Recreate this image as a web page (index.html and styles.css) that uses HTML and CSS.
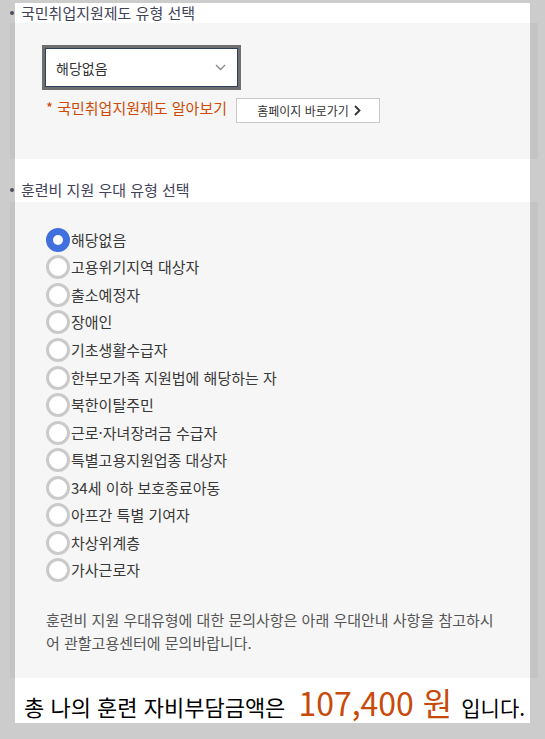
FILE: index.html
```html
<!DOCTYPE html>
<html lang="ko">
<head>
<meta charset="utf-8">
<title>훈련비 자비부담금액</title>
<link rel="stylesheet" href="styles.css">
</head>
<body>
<div class="panel">
  <h2 class="title first"><span class="dot"></span>국민취업지원제도 유형 선택</h2>
  <section class="box box-top">
    <div class="select">
      <div class="select-inner">
        <span class="select-text">해당없음</span>
        <svg class="chev" width="11" height="7" viewBox="0 0 11 7"><polyline points="1,1 5.5,5.5 10,1" fill="none" stroke="#8a8a8a" stroke-width="1.4"/></svg>
      </div>
    </div>
    <div class="info-row">
      <span class="info">* 국민취업지원제도 알아보기</span>
      <button class="go-btn">홈페이지 바로가기<svg class="btn-chev" width="7" height="11" viewBox="0 0 7 11"><polyline points="1,1 5.5,5.5 1,10" fill="none" stroke="#333" stroke-width="1.8"/></svg></button>
    </div>
  </section>
  <h2 class="title second"><span class="dot"></span>훈련비 지원 우대 유형 선택</h2>
  <section class="box box-bottom">
    <ul class="radios">
      <li class="radio-row"><span class="radio checked"></span><span class="label">해당없음</span></li>
      <li class="radio-row"><span class="radio"></span><span class="label">고용위기지역 대상자</span></li>
      <li class="radio-row"><span class="radio"></span><span class="label">출소예정자</span></li>
      <li class="radio-row"><span class="radio"></span><span class="label">장애인</span></li>
      <li class="radio-row"><span class="radio"></span><span class="label">기초생활수급자</span></li>
      <li class="radio-row"><span class="radio"></span><span class="label">한부모가족 지원법에 해당하는 자</span></li>
      <li class="radio-row"><span class="radio"></span><span class="label">북한이탈주민</span></li>
      <li class="radio-row"><span class="radio"></span><span class="label">근로·자녀장려금 수급자</span></li>
      <li class="radio-row"><span class="radio"></span><span class="label">특별고용지원업종 대상자</span></li>
      <li class="radio-row"><span class="radio"></span><span class="label">34세 이하 보호종료아동</span></li>
      <li class="radio-row"><span class="radio"></span><span class="label">아프간 특별 기여자</span></li>
      <li class="radio-row"><span class="radio"></span><span class="label">차상위계층</span></li>
      <li class="radio-row"><span class="radio"></span><span class="label">가사근로자</span></li>
    </ul>
    <p class="note">훈련비 지원 우대유형에 대한 문의사항은 아래 우대안내 사항을 참고하시어 관할고용센터에 문의바랍니다.</p>
  </section>
  <div class="total">
    <span class="total-text">총 나의 훈련 자비부담금액은</span>
    <span class="amount">107,400 원</span>
    <span class="total-text end">입니다.</span>
  </div>
</div>
</body>
</html>
```
FILE: styles.css
```css
html, body {
  margin: 0;
  padding: 0;
}
body {
  background: #cccccc;
  font-family: "Noto Sans CJK KR", "Noto Sans", sans-serif;
  color: #333;
  width: 545px;
  height: 739px;
  overflow: hidden;
}
.panel {
  margin: 15px 0 0 15px;
  width: 515px;
  background: #ffffff;
}
.title {
  display: flex;
  align-items: center;
  margin: 0;
  height: 20px;
  font-size: 15px;
  font-weight: 400;
  color: #3f4358;
  line-height: 20px;
  position: relative;
}
.title.first {
  margin-top: -12px;
  margin-bottom: 0;
}
.title.second {
  margin-top: 21px;
  margin-bottom: 2px;
}
.dot {
  display: inline-block;
  width: 4px;
  height: 4px;
  border-radius: 50%;
  background: #4a4e63;
  margin-left: -5px;
  margin-right: 7px;
}
.box {
  background: rgba(0, 0, 0, 0.035);
  margin: 0 -8px 0 -5px;
  box-sizing: border-box;
}
.box-top {
  height: 136px;
  padding: 22px 0 0 32px;
}
.select {
  width: 199px;
  height: 45px;
  box-sizing: border-box;
  border: 3px solid #6f6f6f;
}
.select-inner {
  height: 100%;
  box-sizing: border-box;
  border: 1px solid #2c3e5a;
  background: #fff;
  display: flex;
  align-items: center;
  justify-content: space-between;
  padding: 0 11px 0 10px;
}
.select-text {
  font-size: 14px;
  color: #333;
}
.chev {
  display: block;
}
.info-row {
  display: flex;
  align-items: flex-start;
  margin-top: 8px;
  margin-left: 4px;
}
.info {
  font-size: 15px;
  line-height: 20px;
  color: #cf4a06;
  margin-right: 9px;
}
.go-btn {
  width: 144px;
  height: 25px;
  box-sizing: border-box;
  border: 1px solid #c8c8c8;
  background: #fff;
  font-family: inherit;
  font-size: 12px;
  color: #333;
  display: flex;
  align-items: center;
  justify-content: center;
  gap: 5px;
  padding: 0 0 0 2px;
  cursor: pointer;
}
.btn-chev {
  display: block;
}
.box-bottom {
  height: 476px;
  padding: 24px 0 0 36px;
}
.radios {
  list-style: none;
  margin: 0;
  padding: 0;
}
.radio-row {
  display: flex;
  align-items: center;
  height: 27.55px;
}
.radio {
  width: 24px;
  height: 24px;
  box-sizing: border-box;
  border-radius: 50%;
  border: 3px solid #cacaca;
  background: #fff;
  flex: none;
}
.radio.checked {
  border: 7px solid #3f70dd;
}
.label {
  font-size: 15px;
  color: #383838;
  margin-left: 1px;
  line-height: 20px;
}
.note {
  margin: 24px 0 0 0;
  width: 456px;
  font-size: 15px;
  line-height: 23.3px;
  color: #555;
  word-break: break-all;
}
.total {
  height: 45px;
  box-sizing: border-box;
  display: flex;
  align-items: baseline;
  padding: 9px 0 0 9px;
}
.total-text {
  font-size: 22px;
  color: #000;
  line-height: 30px;
}
.total-text.end {
  font-size: 21px;
}
.amount {
  font-size: 32px;
  line-height: 30px;
  color: #c84a0b;
  margin: 0 9px 0 13px;
}
```
